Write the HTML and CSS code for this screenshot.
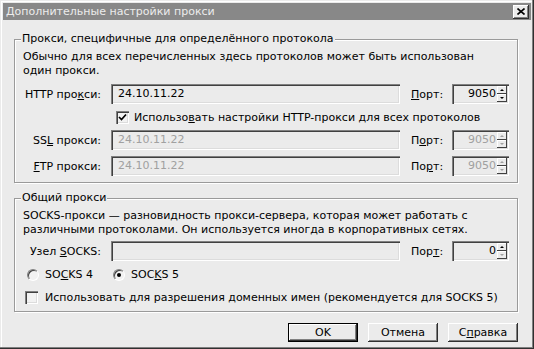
FILE: index.html
```html
<!DOCTYPE html>
<html lang="ru">
<head>
  <meta charset="UTF-8">
  <meta name="viewport" content="width=device-width, initial-scale=1.0">
  <title>Дополнительные настройки прокси</title>
  <link rel="stylesheet" href="styles.css">
</head>
<body>
  <div class="window">
    <div class="titlebar">
      <span class="title">Дополнительные настройки прокси</span>
      <span class="close">
        <svg width="8" height="7" viewBox="0 0 8 7"><path d="M0.5 0.5 L7.5 6.5 M7.5 0.5 L0.5 6.5" stroke="#000" stroke-width="1.6" fill="none"/></svg>
      </span>
    </div>

    <div class="content">
      <fieldset class="group group-protocols">
        <legend>Прокси, специфичные для определённого протокола</legend>
        <p class="note">Обычно для всех перечисленных здесь протоколов может быть использован<br>один прокси.</p>

        <div class="row row-first">
          <label class="name">HTTP про<u>к</u>си:</label>
          <div class="field">24.10.11.22</div>
          <label class="port"><u>П</u>орт:</label>
          <div class="spin">
            <span class="spin-value">9050</span>
            <span class="spin-btns"><span class="spin-btn up"></span><span class="spin-btn down"></span></span>
          </div>
        </div>

        <div class="check-row shared">
          <span class="checkbox checked">
            <svg width="9" height="9" viewBox="0 0 9 9"><path d="M1 4 L3.5 6.5 L8 1.5" stroke="#000" stroke-width="1.7" fill="none"/></svg>
          </span>
          <span>Использо<u>в</u>ать настройки HTTP-прокси для всех протоколов</span>
        </div>

        <div class="row row-ssl disabled">
          <label class="name">SS<u>L</u> прокси:</label>
          <div class="field">24.10.11.22</div>
          <label class="port">П<u>о</u>рт:</label>
          <div class="spin">
            <span class="spin-value">9050</span>
            <span class="spin-btns"><span class="spin-btn up"></span><span class="spin-btn down"></span></span>
          </div>
        </div>

        <div class="row disabled">
          <label class="name"><u>F</u>TP прокси:</label>
          <div class="field">24.10.11.22</div>
          <label class="port">По<u>р</u>т:</label>
          <div class="spin">
            <span class="spin-value">9050</span>
            <span class="spin-btns"><span class="spin-btn up"></span><span class="spin-btn down"></span></span>
          </div>
        </div>
      </fieldset>

      <fieldset class="group group-socks">
        <legend>Общий прокси</legend>
        <p class="note">SOCKS-прокси — разновидность прокси-сервера, которая может работать с<br>различными протоколами. Он используется иногда в корпоративных сетях.</p>

        <div class="row row-socks">
          <label class="name">Узел <u>S</u>OCKS:</label>
          <div class="field"></div>
          <label class="port">Пор<u>т</u>:</label>
          <div class="spin">
            <span class="spin-value">0</span>
            <span class="spin-btns"><span class="spin-btn up"></span><span class="spin-btn down off"></span></span>
          </div>
        </div>

        <div class="radio-row">
          <span class="radio"></span>
          <span class="radio-text">SO<u>C</u>KS 4</span>
          <span class="radio selected"></span>
          <span class="radio-text">SOC<u>K</u>S 5</span>
        </div>

        <div class="check-row dns">
          <span class="checkbox"></span>
          <span>Использовать <u>д</u>ля разрешения доменных имен (рекомендуется для SOCKS 5)</span>
        </div>
      </fieldset>

      <div class="buttons">
        <button class="btn btn-default">OK</button>
        <button class="btn">Отмена</button>
        <button class="btn">С<u>п</u>равка</button>
      </div>
    </div>
  </div>
</body>
</html>
```

FILE: styles.css
```css
body {
  margin: 0;
  font-family: "DejaVu Sans", Verdana, sans-serif;
  font-size: 11px;
  color: #000;
  background: #ebebeb;
}
u {
  text-decoration-thickness: 1px;
  text-underline-offset: 1px;
}
.window {
  width: 534px;
  height: 349px;
  box-sizing: border-box;
  padding: 3px;
  background: #ebebeb;
  overflow: hidden;
  box-shadow: inset -1px -1px #303030, inset -2px -2px #808080, inset 1px 1px #ebebeb, inset 2px 2px #fff;
}
.titlebar {
  height: 17px;
  display: flex;
  align-items: center;
  justify-content: space-between;
  padding: 0 2px 0 3px;
  background: #888;
  color: #ececec;
}
.title {
  line-height: 17px;
}
.close {
  width: 16px;
  height: 14px;
  box-sizing: border-box;
  display: flex;
  align-items: center;
  justify-content: center;
  background: #ebebeb;
  box-shadow: inset -1px -1px #303030, inset 1px 1px #fff, inset -2px -2px #808080;
}
.close svg {
  display: block;
}
.content {
  padding: 0 13px 0 11px;
}
.group {
  margin: 12px 0 0;
  padding: 4px 8px 6px;
  border: 1px solid #9a9a9a;
  box-shadow: inset 1px 1px #fff, 1px 1px #fff;
}
.group legend {
  padding: 0 1px;
  margin-left: -2px;
  line-height: 14px;
  background: #ebebeb;
}
.group-socks {
  margin-top: 8px;
  padding-bottom: 7px;
}
.note {
  margin: 0;
  line-height: 14px;
}
.row {
  display: flex;
  align-items: center;
  height: 20px;
  margin-top: 6px;
}
.row-socks {
  margin-top: 4px;
}
.name {
  width: 78px;
  margin-right: 10px;
  text-align: right;
  white-space: nowrap;
}
.field {
  width: 289px;
  height: 20px;
  box-sizing: border-box;
  padding-left: 7px;
  line-height: 20px;
  box-shadow: inset 1px 1px #808080, inset 2px 2px #404040, inset -1px -1px #fff, inset -2px -2px #dcdcdc;
}
.port {
  width: 41px;
  margin-left: 11px;
}
.spin {
  width: 57px;
  height: 20px;
  box-sizing: border-box;
  display: flex;
  padding: 2px 2px 2px 2px;
  box-shadow: inset 1px 1px #808080, inset 2px 2px #404040, inset -1px -1px #fff, inset -2px -2px #dcdcdc;
}
.spin-value {
  flex: 1;
  text-align: right;
  line-height: 16px;
  padding-right: 1px;
}
.spin-btns {
  width: 10px;
  display: flex;
  flex-direction: column;
}
.spin-btn {
  flex: 1;
  display: flex;
  align-items: center;
  justify-content: center;
  background: #ebebeb;
  box-shadow: inset -1px -1px #404040, inset 1px 1px #fff;
}
.spin-btn::after {
  content: "";
  width: 0;
  height: 0;
  border-left: 2px solid transparent;
  border-right: 2px solid transparent;
}
.spin-btn.up::after {
  border-bottom: 2px solid #000;
  margin-top: -1px;
}
.spin-btn.down::after {
  border-top: 2px solid #000;
  margin-top: -1px;
}
.spin-btn.off::after,
.disabled .spin-btn::after {
  border-top-color: #a0a0a0;
  border-bottom-color: #a0a0a0;
}
.disabled .spin-btn.up::after {
  border-top-color: transparent;
}
.disabled .spin-btn.down::after,
.spin-btn.off::after {
  border-bottom-color: transparent;
}
.disabled .field,
.disabled .spin-value {
  color: #a0a0a0;
}
.check-row {
  display: flex;
  align-items: center;
  height: 13px;
  line-height: 14px;
}
.check-row.shared {
  margin: 7px 0 0 93px;
  gap: 5px;
}
.check-row.dns {
  margin: 10px 0 0 2px;
  gap: 7px;
}
.checkbox {
  width: 13px;
  height: 13px;
  box-sizing: border-box;
  display: flex;
  align-items: center;
  justify-content: center;
  background: #f2f2f2;
  box-shadow: inset 1px 1px #808080, inset 2px 2px #404040, inset -1px -1px #fff, inset -2px -2px #dcdcdc;
}
.checkbox svg {
  display: block;
}
.radio-row {
  display: flex;
  align-items: center;
  height: 13px;
  margin: 7px 0 0 4px;
}
.radio {
  width: 12px;
  height: 12px;
  box-sizing: border-box;
  position: relative;
  border-radius: 50%;
  border: 1px solid;
  border-color: #808080 #fff #fff #808080;
  background: #f2f2f2;
  box-shadow: inset 1px 1px #404040;
}
.radio.selected::after {
  content: "";
  position: absolute;
  left: 3px;
  top: 3px;
  width: 4px;
  height: 4px;
  border-radius: 50%;
  background: #000;
}
.radio-text {
  margin-left: 6px;
  margin-right: 20px;
}
.buttons {
  display: flex;
  justify-content: flex-end;
  gap: 10px;
  margin-top: 11px;
}
.btn {
  width: 70px;
  height: 19px;
  padding: 0;
  border: none;
  font: inherit;
  color: #000;
  background: #ebebeb;
  box-shadow: inset -1px -1px #303030, inset 1px 1px #fff, inset -2px -2px #808080;
}
.btn-default {
  box-shadow: inset 0 0 0 1px #000, inset -2px -2px #303030, inset 2px 2px #fff, inset -3px -3px #808080;
}
```
